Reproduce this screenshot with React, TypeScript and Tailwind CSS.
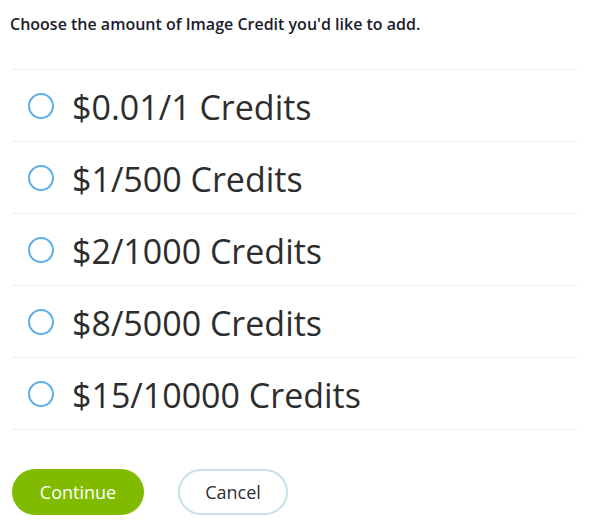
import React, { useState } from "react";

const options = [
  "$0.01/1 Credits",
  "$1/500 Credits",
  "$2/1000 Credits",
  "$8/5000 Credits",
  "$15/10000 Credits"
];

export default function App() {
  const [selected, setSelected] = useState<number | null>(null);

  return (
    <div className="w-[595px] h-[531px] bg-white font-['Open_Sans',sans-serif] text-[#2b2b2b]">
      <div className="pl-[10px] pt-[12px] text-[16px] leading-[24px] font-semibold text-[#1c1c2a]">
        Choose the amount of Image Credit you'd like to add.
      </div>

      <ul className="mx-[12px] mt-[33px] w-[566px] border-b border-[#e9eff1]">
        {options.map((label, i) => (
          <li
            key={label}
            className="flex h-[72px] items-center border-t border-[#e9eff1] pl-[16px]"
            onClick={() => setSelected(i)}
          >
            <span className="flex h-[26px] w-[26px] shrink-0 items-center justify-center rounded-full border-[2.5px] border-[#5daeed]">
              {selected === i && (
                <span className="h-[12px] w-[12px] rounded-full bg-[#5daeed]" />
              )}
            </span>
            <span className="ml-[18px] pt-[3px] text-[34px] leading-none text-[#2d2d2d]">
              {label}
            </span>
          </li>
        ))}
      </ul>

      <div className="mt-[39px] flex gap-[34px] pl-[12px]">
        <button className="h-[46px] w-[132px] rounded-full bg-[#80bb00] text-[18px] text-white">
          Continue
        </button>
        <button className="h-[46px] w-[110px] rounded-full border-2 border-[#c8dfe8] bg-white text-[18px] text-[#2d2d3a]">
          Cancel
        </button>
      </div>
    </div>
  );
}
